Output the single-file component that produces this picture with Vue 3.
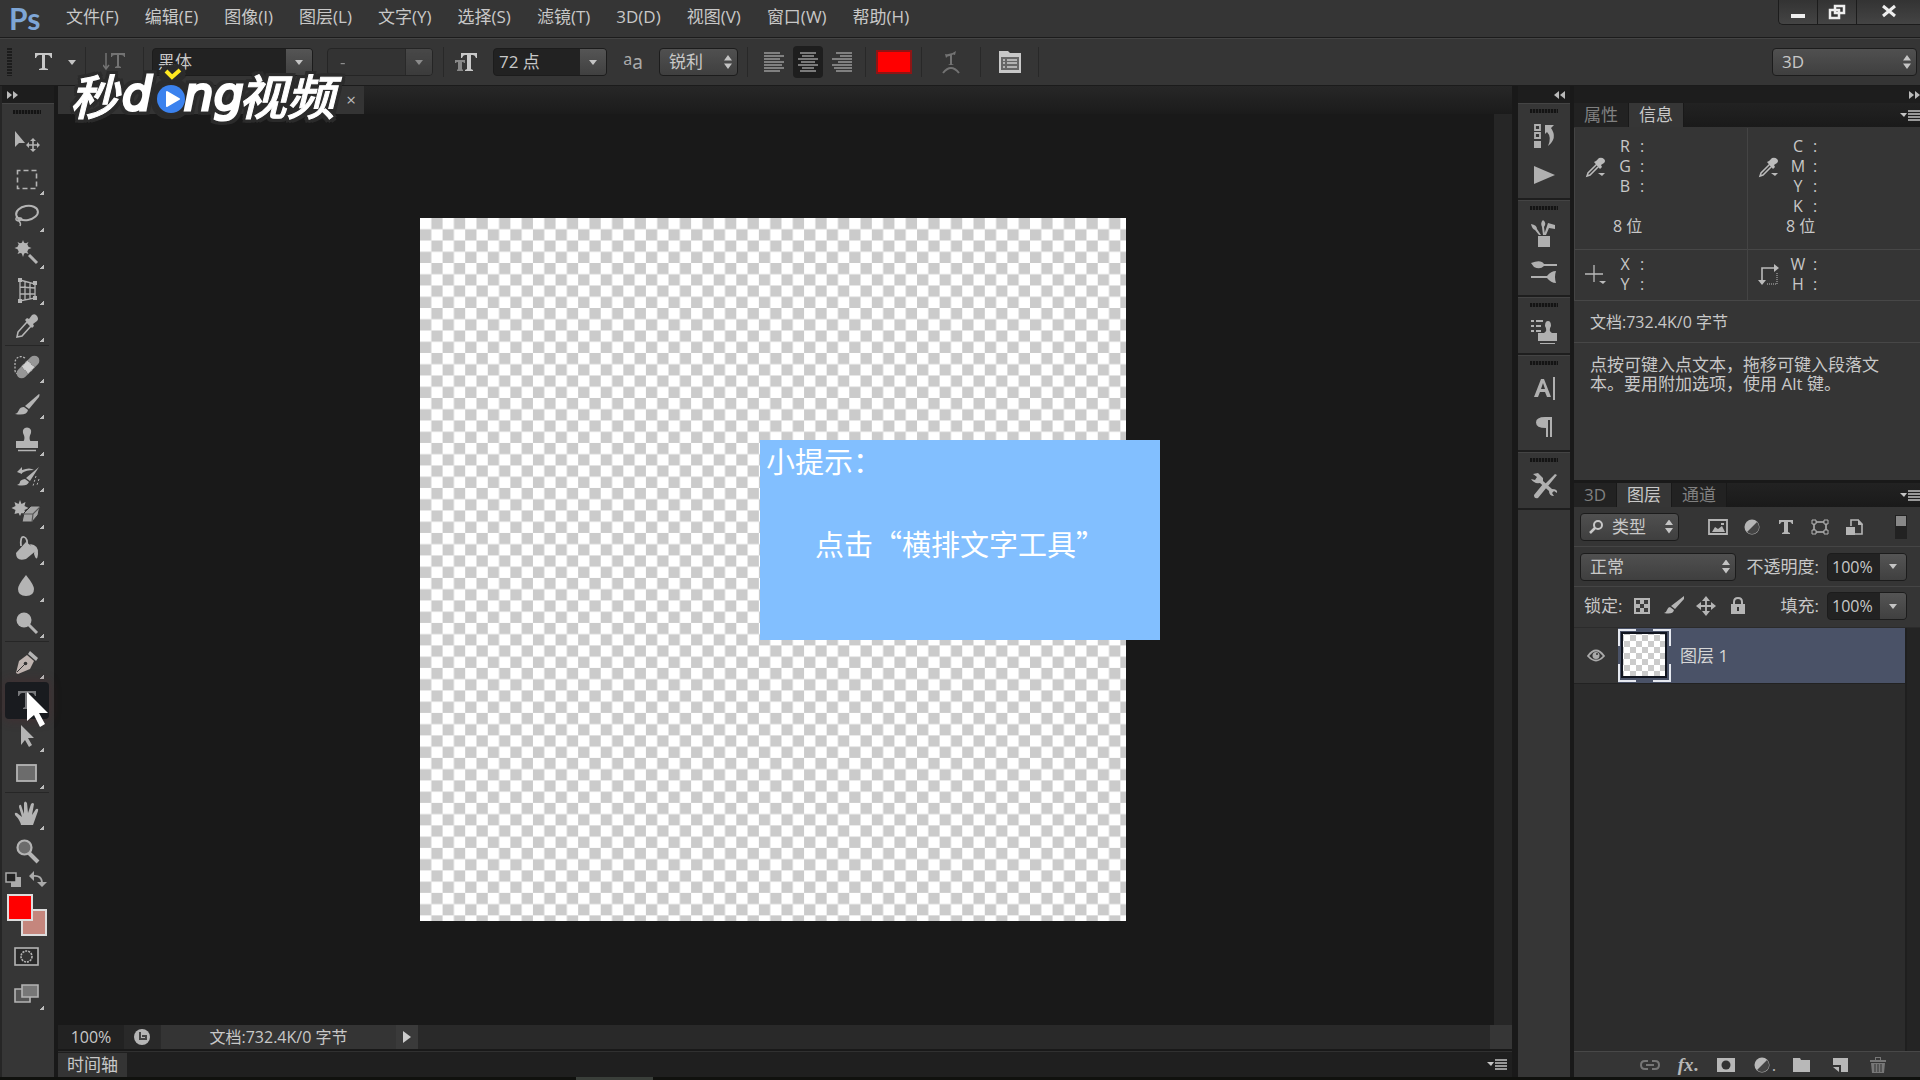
<script setup>
import { h, ref } from 'vue'

const icons = {
  move: '<path d="M10 6v16l4-4h6z" fill="currentColor"/><path d="M28 14v12M22 20h12" stroke="currentColor" stroke-width="1.6"/><path d="M28 13l3 3h-6zM28 27l3-3h-6zM21 20l3-3v6zM35 20l-3-3v6z" fill="currentColor"/>',
  marquee: '<rect x="12.500" y="8.500" width="19" height="18" fill="none" stroke="currentColor" stroke-width="1.600" stroke-dasharray="5 3" stroke-dashoffset="2"/>',
  lasso: '<ellipse cx="22" cy="14" rx="11" ry="7" transform="rotate(-10 22 14)" fill="none" stroke="currentColor" stroke-width="2"/><path d="M12 18c-3 3 1 5 4 3s-3-3-3-1 4 3 2 7" fill="none" stroke="currentColor" stroke-width="1.500"/>',
  wand: '<path d="M18 5l1.500 4 4-2-2 4 5 2-5 2 2 4-4-1.500-1.500 4.500-1.500-4.500-4 1.500 2-4-5-2 5-2-2-4 4 2z" fill="currentColor"/><circle cx="18" cy="13" r="5.500" fill="currentColor"/><path d="M24 20l8 8" stroke="currentColor" stroke-width="3"/>',
  crop: '<path d="M15 8l15 4v14l-15 3zM20 9v19M25 11v16M15 15l15 1M15 22h15" fill="none" stroke="currentColor" stroke-width="1.300"/><path d="M13 6h4v4h-4zM28 9h4v4h-4zM28 24h4v4h-4zM13 27h4v4h-4z" fill="currentColor"/>',
  eyedropper: '<path d="M22 13l-9 10-1 5 5-1 9-10z" fill="none" stroke="currentColor" stroke-width="1.600"/><path d="M20 11l2-2 2 1 3-4q3-2 5 1t0 5l-4 3 1 2-2 2z" fill="currentColor"/>',
  heal: '<path d="M20 9c-4-3-10-1-10 5v7q0 4 4 4" fill="none" stroke="currentColor" stroke-width="1.300" stroke-dasharray="2 1.500"/><rect x="9" y="13" width="28" height="10" rx="5" transform="rotate(-45 23 18)" fill="#969696"/><rect x="18.500" y="13" width="9" height="10" transform="rotate(-45 23 18)" fill="#d0d0d0" stroke="#777" stroke-width="1" stroke-dasharray="1 1"/>',
  brush: '<path d="M34 8q1 0 0 3l-10 12-4-3z" fill="currentColor"/><path d="M19 21l4 3q-1 6-13 4 3-1 4-4t5-3z" fill="currentColor"/>',
  stamp: '<path d="M18 22v-2q3-3 0-9-1-5 4-5.500 5 .5 4 5.500-3 6 0 9v2zM11 19h22v7H11z" fill="currentColor"/><path d="M13 28.500h18" stroke="currentColor" stroke-width="1.500"/>',
  history: '<path d="M12 13l5-5v3q8-3 12 0-8 0-12 3v1z" fill="currentColor"/><path d="M34 8l-9 14-4-3zM20 20l4 3q-2 5-12 3 3-1 3-3t5-3z" fill="currentColor"/><path d="M31 17l-3 10M34 20l-2 6" stroke="currentColor" stroke-dasharray="2 2"/>',
  eraser: '<path d="M15 5l1.500 4 4-2-1 4 4 2-4 2 1 4-4-1-1.500 3-1.500-3-4 1 1-4-4-2 4-2-1-4 4 2z" fill="currentColor"/><path d="M19 18l7-7h9l-2 9-6 7H17z" fill="#a4a4a4" stroke="#333"/><path d="M18 19h10l7-7M28 19l-1 8" fill="none" stroke="#555" stroke-width="1.200"/>',
  bucket: '<path d="M16 14q-1-10 3-9t3 10" fill="none" stroke="currentColor" stroke-width="1.800"/><path d="M11 21l10-11 11 8-11 9q-10 3-10-6z" fill="currentColor"/><path d="M25 12q9 1 8 10t-4 0q1-4-2-6z" fill="currentColor"/>',
  drop: '<path d="M21 7q8 10 8 14 0 7-8 7t-8-7q0-4 8-14z" fill="currentColor"/>',
  dodge: '<circle cx="19" cy="15" r="7.500" fill="currentColor"/><path d="M23 19l9 9" stroke="currentColor" stroke-width="3"/>',
  pen: '<path d="M11 28l3-12 8-6 7 6-4 8-12 5z" fill="#bfb4b0"/><path d="M25 6l8 7-2 3-8-7z" fill="currentColor"/><path d="M12 27l8-8" stroke="#333" stroke-width="1"/><circle cx="20.500" cy="18.500" r="1.800" fill="#333"/>',
  type: '<path d="M13 9h18v5h-1q-1-3-3-3h-3v14l2 1v1h-8v-1l2-1V11h-3q-2 0-3 3h-1z" fill="currentColor"/>',
  path: '<path d="M16 6v20l4-5 4 7 3-2-4-7h6z" fill="currentColor"/>',
  rect: '<rect x="12" y="9" width="19" height="16" fill="#6c6c6c" stroke="currentColor" stroke-width="1.800"/>',
  hand: '<path d="M16 29q-1-5-6-10-1-3 2-2l5 4-3-10q0-3 2-2l3 9 0-11q1-3 3 0l1 10 3-9q2-2 3 0l-2 11 4-6q3-1 2 2l-5 14z" fill="currentColor"/>',
  zoom: '<circle cx="19.500" cy="14.500" r="7" fill="#6c6c6c" stroke="currentColor" stroke-width="2.200"/><path d="M24 20l9 9" stroke="currentColor" stroke-width="4"/>',
  mask: '<rect x="10" y="10" width="23" height="17" fill="#292929" stroke="currentColor" stroke-width="1.600"/><circle cx="21.500" cy="18.500" r="5.500" fill="#333" stroke="currentColor" stroke-width="1.600" stroke-dasharray="2 1"/>',
  screens: '<path d="M10 13h15v13H10z" fill="#555" stroke="currentColor" stroke-width="1.600"/><path d="M17 9h16v12H17z" fill="#777" stroke="currentColor" stroke-width="1.600"/>',
  defaults: '<path d="M6 7h10v10H6z" fill="currentColor"/><path d="M1 3h10v9H1z" fill="#222" stroke="currentColor" stroke-width="1.500"/>',
  swap: '<path d="M4 6q9-1 9 7" fill="none" stroke="currentColor" stroke-width="1.800"/><path d="M0 6l5-5v10zM8 12h10l-5 5z" fill="currentColor"/>',
  dHistory: '<path d="M4 4h5v5H4zM4 12h5v5H4z" fill="none" stroke="currentColor" stroke-width="1.800"/><path d="M3 20h7v7H3z" fill="currentColor"/><path d="M14 4h9l-3 3q7 10-3 18 4-9-1-14l-2 2z" fill="currentColor"/>',
  dPlay: '<path d="M3 6l21 9-21 9z" fill="currentColor"/>',
  dBrushes: '<path d="M7 18h12v11H7zM12 2q4 3 1 7l1 8h-2l-1-8q-2-4 1-7zM0 6q6 1 6 5l4 6H8l-4-5q-3-1-4-6zM17 5l7 2v4l-6-1-3 7h-2z" fill="currentColor"/>',
  dPresets: '<path d="M0 6q10-4 13 1h13v2H13q-4 4-10 1zM0 19h16q4-5 9-5-2 6 0 12-5 0-9-5H0z" fill="currentColor"/>',
  dClone: '<path d="M7 18h19v8H7zM13 18q4-2 1-7 0-5 3-5t3 5q-3 5 1 7zM9 28h15v1H9z" fill="currentColor"/><path d="M0 6h3M0 11h3M0 16h3M5 6h7M5 11h5M5 16h5" stroke="currentColor" stroke-width="2"/>',
  dChar: '<path d="M3 24L10 6h3l7 18h-4l-2-5H9l-2 5zm7-8h4l-2-6zM22 4h2v23h-2z" fill="currentColor"/>',
  dPara: '<path d="M21 5v20h-2V8h-2v17h-2V16q-10 0-10-5.500T14 5z" fill="currentColor"/>',
  dTools: '<path d="M2 4l5-1 5 5 0 3 9 8q6 0 5 4l-3-2-2 2 2 3q-5 0-5-5l-9-8q-6 1-9-4l4 1 2-3z" fill="currentColor"/><path d="M24 4l2 1-9 11-3-2zM12 14l4 3-9 11q-4 1-4-3z" fill="currentColor"/>',
  oType: '<path d="M1 2h17v5h-1q-1-3-3-3h-3v13l3 1v1H5v-1l3-1V4H5Q3 4 2 7H1z" fill="currentColor"/>',
  oOrient: '<path d="M3 2v15M0 14l3 4 3-4" fill="none" stroke="currentColor" stroke-width="1.500"/><path d="M8 2h14v4h-1q0-2-3-2h-2v11l2 1v1h-6v-1l2-1V4h-2Q9 4 9 6H8z" fill="currentColor"/>',
  oSize: '<path d="M6 2h16v5h-1q-1-3-3-3h-2v14l2 1v1h-8v-1l2-1V4h-2Q8 4 7 7H6z" fill="currentColor"/><path d="M0 9h10v3H9q0-1-2-1v7l1 1v1H2v-1l1-1v-7q-2 0-2 1H0z" fill="#888"/>',
  oWarp: '<path d="M5 4q6 1 11-3l-1 4q-2-1-3 0v9l2 1H8l2-1V6Q7 6 6 8z" fill="currentColor"/><path d="M3 23q8-10 16 0" fill="none" stroke="currentColor" stroke-width="2"/>',
  oPanel: '<path d="M0 1h9l2 2h11v20H0z" fill="currentColor"/><path d="M2 7h18v13H2z" fill="#666"/><path d="M4 10h2M8 10h10M4 13h2M8 13h10M4 17h2M8 17h10" stroke="#ccc" stroke-width="1.500"/>',
  fImage: '<path d="M1 3h18v14H1z" fill="none" stroke="currentColor" stroke-width="1.800"/><path d="M4 15l3-5 3 2 4-3 3 6zM13 6h3v2h-3z" fill="currentColor"/>',
  fAdjust: '<circle cx="10" cy="10" r="7.500" fill="currentColor"/><path d="M15 5A7 7 0 015 15z" fill="#444"/>',
  fType: '<path d="M3 3h14v4h-1q-1-2-2-2h-2v10l2 1v1H6v-1l2-1V5H6Q5 5 4 7H3z" fill="currentColor"/>',
  fShape: '<path d="M4 5h12v10H4z" fill="none" stroke="currentColor" stroke-width="1.500"/><path d="M2 3h4v4H2zM14 3h4v4h-4zM2 13h4v4H2zM14 13h4v4h-4z" fill="#333" stroke="currentColor"/>',
  fSmart: '<path d="M7 9V3h7l4 4v10h-7" fill="none" stroke="currentColor" stroke-width="1.600"/><path d="M14 2v6h5M2 10h9v8H2z" fill="currentColor"/>',
  lPixels: '<path d="M2 2h16v16H2z" fill="currentColor"/><path d="M4 4h4v4H4zM12 4h4v4h-4zM8 8h4v4H8zM4 12h4v4H4zM12 12h4v4h-4z" fill="#3c3c3c"/>',
  lBrush: '<path d="M20 0q1 1 0 3l-9 10-4-3zM6 11l4 3q-1 5-10 3 2 0 3-3t3-3z" fill="currentColor"/>',
  lMove: '<path d="M10 3v14M3 10h14" stroke="currentColor" stroke-width="1.800"/><path d="M10 0l4 5H6zM10 20l4-5H6zM0 10l5-4v8zM20 10l-5-4v8z" fill="currentColor"/>',
  lLock: '<path d="M6 9V6q0-4 4-4t4 4v3" fill="none" stroke="currentColor" stroke-width="2"/><path d="M3 8h14v10H3z" fill="currentColor"/><path d="M9 11h2v4H9z" fill="#333"/>',
  bLink: '<path d="M8 6H5Q1 6 1 10t4 4h3M12 6h3q4 0 4 4t-4 4h-3M6 10h8" fill="none" stroke="currentColor" stroke-width="2"/>',
  bMask: '<path d="M1 3h18v14H1z" fill="currentColor"/><circle cx="10" cy="10" r="4.500" fill="#333"/>',
  bFolder: '<path d="M1 3h7l1 2h9v12H1z" fill="currentColor"/>',
  bNew: '<path d="M3 3h15v14h-7v-7H3z" fill="currentColor"/><path d="M3 12h6v5z" fill="currentColor"/>',
  bTrash: '<path d="M2 5h16v2H2zM3 8h14l-1 10H4zM7 5V2h6v3h-1V3H8v2z" fill="currentColor"/><path d="M7 9v8M10 9v8M13 9v8" stroke="#333"/>',
  search: '<circle cx="9" cy="6" r="4" fill="none" stroke="currentColor" stroke-width="2"/><path d="M6 9l-5 5" stroke="currentColor" stroke-width="2.500"/>',
  dropper: '<path d="M12 7l-9 9-1 3 3-1 9-9z" fill="none" stroke="currentColor" stroke-width="1.500"/><path d="M9 5l2-1 3-3q3-1 5 1t0 4l-3 2 1 2-2 2z" fill="currentColor"/><path d="M13 16h7l-3 3z" fill="currentColor"/>',
  cross: '<path d="M9 1v17M0 10h18" stroke="currentColor" stroke-width="1.300"/><path d="M14 17h7l-3 3z" fill="currentColor"/>',
  size: '<path d="M4 17V4h13" fill="none" stroke="currentColor" stroke-width="1.600"/><path d="M16 0l5 4-5 4zM0 16h8l-4 5z" fill="currentColor"/><path d="M19 9v11H9" fill="none" stroke="currentColor" stroke-dasharray="1 1"/>',
  eye: '<path d="M1 8q8-11 16 0-8 9-16 0z" fill="none" stroke="currentColor" stroke-width="1.800"/><circle cx="9" cy="7.500" r="3.500" fill="currentColor"/><circle cx="10" cy="6" r="1" fill="#333"/>',
  menu: '<path d="M0 3h7l-3 4z" fill="#c4c4c4"/><path d="M8 1h12M8 4h12M8 7h12M8 10h12" stroke="#999" stroke-width="2"/>',
}

const Icon = (props) =>
  h('svg', {
    viewBox: `0 0 ${props.w} ${props.t}`,
    width: props.w,
    height: props.t,
    'aria-hidden': 'true',
    innerHTML: icons[props.name],
  })
Icon.props = ['name', 'w', 't']

const menus = ['文件(F)', '编辑(E)', '图像(I)', '图层(L)', '文字(Y)', '选择(S)', '滤镜(T)', '3D(D)', '视图(V)', '窗口(W)', '帮助(H)']
const toolGroups = [
  ['move', 'marquee', 'lasso', 'wand', 'crop', 'eyedropper'],
  ['heal', 'brush', 'stamp', 'history', 'eraser', 'bucket', 'drop', 'dodge'],
  ['pen', 'type', 'path', 'rect'],
  ['hand', 'zoom'],
]
const noFlyout = ['move', 'zoom', 'type', 'mask']
const dock = [['dHistory', 'dPlay'], ['dBrushes', 'dPresets'], ['dClone'], ['dChar', 'dPara'], ['dTools']]
const filters = ['fImage', 'fAdjust', 'fType', 'fShape', 'fSmart']
const locks = ['lPixels', 'lBrush', 'lMove', 'lLock']
const aligns = [
  { id: 'left', d: 'M0 1h16M0 4h20M0 7h16M0 10h20M0 13h18M0 16h20M0 19h16' },
  { id: 'center', d: 'M2 1h16M4 4h12M0 7h20M3 10h14M0 13h20M4 16h12M2 19h16' },
  { id: 'right', d: 'M4 1h16M8 4h12M0 7h20M6 10h14M0 13h20M2 16h18M4 19h16' },
]
const fontSize = ref('72 点')
const opacity = ref('100%')
const fill = ref('100%')
</script>

<template>
  <div class="app">
    <header class="menubar">
      <span class="ps">Ps</span>
      <nav class="menus">
        <button v-for="m in menus" :key="m">{{ m }}</button>
      </nav>
      <div class="winbtns">
        <button aria-label="最小化"><svg width="16" height="20"><path d="M1 12h14v4H1z" fill="#eee" /></svg></button>
        <button aria-label="还原"><svg width="18" height="20"><path d="M7 4h9v7H7zM2 8h9v8H2z" fill="#333" stroke="#eee" stroke-width="2.500" /></svg></button>
        <button class="wide" aria-label="关闭"><svg width="16" height="20"><path d="M2 4l12 10M14 4L2 14" stroke="#eee" stroke-width="3" /></svg></button>
      </div>
    </header>

    <section class="options">
      <i class="vgrip"></i>
      <div class="seg s1"><Icon name="oType" w="20" t="22" /><i class="down"></i></div>
      <div class="seg s2 dim"><Icon name="oOrient" w="24" t="22" /></div>
      <div class="seg s3">
        <label class="combo family"><select aria-label="字体"><option>黑体</option></select><i class="drop"></i></label>
        <label class="combo style off"><select aria-label="字形" disabled><option>-</option></select><i class="drop"></i></label>
      </div>
      <div class="seg s4">
        <Icon name="oSize" w="24" t="22" />
        <div class="combo size"><input v-model="fontSize" aria-label="字号" /><button class="drop" aria-label="选择字号"></button></div>
        <span class="aa"><sup>a</sup>a</span>
        <label class="pick sharp"><select aria-label="消除锯齿"><option>锐利</option></select><i class="updown"></i></label>
      </div>
      <div class="seg s5">
        <button v-for="a in aligns" :key="a.id" class="align" :class="{ on: a.id === 'center' }" :aria-label="a.id">
          <svg width="20" height="20"><path :d="a.d" stroke="#999" stroke-width="1.500" /></svg>
        </button>
      </div>
      <div class="seg s6"><button class="color" aria-label="文本颜色"></button></div>
      <div class="seg s7 dim"><Icon name="oWarp" w="22" t="24" /></div>
      <div class="seg s8"><Icon name="oPanel" w="22" t="24" /></div>
      <label class="pick workspace"><select aria-label="工作区"><option>3D</option></select><i class="updown"></i></label>
    </section>

    <div class="body">
      <aside class="tools">
        <div class="strip"><svg width="12" height="8"><path d="M1 0l5 4-5 4zM7 0l5 4-5 4z" fill="#bbb" /></svg></div>
        <div class="toolbody">
          <i class="grip"></i>
          <div v-for="(g, n) in toolGroups" :key="n" class="group" :class="'g' + n">
            <button v-for="t in g" :key="t" class="tool" :class="{ active: t === 'type' }" :aria-label="t">
              <Icon :name="t" w="44" t="36" />
              <i v-if="!noFlyout.includes(t)" class="corner"></i>
              <svg v-if="t === 'type'" class="cursor" width="26" height="38"><path d="M2 1v29l7-6 6 12 5-3-6-11h9z" fill="#fff" /></svg>
            </button>
          </div>
          <div class="minis"><Icon name="defaults" w="20" t="20" /><Icon name="swap" w="20" t="20" /></div>
          <div class="swatches"><button class="back" aria-label="背景色"></button><button class="fore" aria-label="前景色"></button></div>
          <button class="tool solo" aria-label="快速蒙版"><Icon name="mask" w="44" t="36" /></button>
          <button class="tool solo" aria-label="屏幕模式"><Icon name="screens" w="44" t="36" /><i class="corner"></i></button>
        </div>
      </aside>

      <main class="doc">
        <div class="doctabs"><div class="doctab"><button aria-label="关闭文档">×</button></div></div>
        <div class="view">
          <div class="stage">
            <div class="artboard">
              <svg class="checker" viewBox="0 0 500 500" preserveAspectRatio="none">
                <defs>
                  <pattern id="cells" width="16" height="16" patternUnits="userSpaceOnUse">
                    <path d="M0 0h16v16H0z" fill="#fff" /><path d="M8 0h8v8H8zM0 8h8v8H0z" fill="#cbcbcb" />
                  </pattern>
                </defs>
                <rect width="500" height="500" fill="url(#cells)" />
              </svg>
              <div class="tip" lang="zh-CN"><p>小提示：</p><p class="msg">点击“横排文字工具”</p></div>
            </div>
          </div>
          <div class="vscroll"></div>
        </div>
        <div class="status">
          <span class="pct">100%</span>
          <svg class="clock" width="18" height="18"><circle cx="9" cy="9" r="8" fill="#b5b5b5" /><path d="M7 4v7h6V8H9" fill="none" stroke="#444" stroke-width="2" /></svg>
          <span class="docsize">文档:732.4K/0 字节</span>
          <button class="next" aria-label="状态菜单"><svg width="9" height="12"><path d="M0 0l8 6-8 6z" fill="#ccc" /></svg></button>
          <i class="corner-box"></i>
        </div>
        <div class="timeline"><span>时间轴</span><Icon name="menu" w="20" t="12" /></div>
      </main>

      <aside class="dock">
        <div class="strip right"><svg width="12" height="8"><path d="M5 0L0 4l5 4zM11 0L6 4l5 4z" fill="#bbb" /></svg></div>
        <div v-for="(g, n) in dock" :key="n" class="dockgroup">
          <i class="grip"></i>
          <button v-for="d in g" :key="d" :aria-label="d"><Icon :name="d" w="27" t="30" /></button>
        </div>
        <div class="dockrest"></div>
      </aside>

      <aside class="panels">
        <div class="strip end"><svg width="12" height="8"><path d="M1 0l5 4-5 4zM7 0l5 4-5 4z" fill="#bbb" /></svg></div>
        <div class="tabs"><button>属性</button><button class="on">信息</button><Icon name="menu" w="20" t="12" /></div>
        <section class="info">
          <div class="inforow tall">
            <div class="cell"><Icon name="dropper" w="22" t="22" /><dl><dt>R</dt><dd>:</dd><dt>G</dt><dd>:</dd><dt>B</dt><dd>:</dd></dl><span class="bits">8 位</span></div>
            <div class="cell"><Icon name="dropper" w="22" t="22" /><dl><dt>C</dt><dd>:</dd><dt>M</dt><dd>:</dd><dt>Y</dt><dd>:</dd><dt>K</dt><dd>:</dd></dl><span class="bits">8 位</span></div>
          </div>
          <div class="inforow">
            <div class="cell"><Icon name="cross" w="22" t="22" /><dl><dt>X</dt><dd>:</dd><dt>Y</dt><dd>:</dd></dl></div>
            <div class="cell"><Icon name="size" w="22" t="22" /><dl><dt>W</dt><dd>:</dd><dt>H</dt><dd>:</dd></dl></div>
          </div>
          <p class="docline">文档:732.4K/0 字节</p>
          <p class="hint">点按可键入点文本，拖移可键入段落文本。要用附加选项，使用 Alt 键。</p>
        </section>
        <div class="tabs second"><button>3D</button><button class="on">图层</button><button>通道</button><Icon name="menu" w="20" t="12" /></div>
        <section class="layers">
          <div class="lrow">
            <label class="pick kind"><Icon name="search" w="15" t="16" /><select aria-label="过滤类型"><option>类型</option></select><i class="updown"></i></label>
            <div class="filters"><button v-for="f in filters" :key="f" :aria-label="f"><Icon :name="f" w="20" t="20" /></button></div>
            <button class="toggle" aria-label="过滤开关"></button>
          </div>
          <div class="lrow">
            <label class="pick mode"><select aria-label="混合模式"><option>正常</option></select><i class="updown"></i></label>
            <label class="lab" for="opacity">不透明度:</label>
            <div class="combo num"><input id="opacity" v-model="opacity" /><button class="drop" aria-label="调整不透明度"></button></div>
          </div>
          <div class="lrow last">
            <span class="locklab">锁定:</span>
            <div class="locks"><button v-for="l in locks" :key="l" :aria-label="l"><Icon :name="l" w="20" t="20" /></button></div>
            <label class="lab" for="fill">填充:</label>
            <div class="combo num"><input id="fill" v-model="fill" /><button class="drop" aria-label="调整填充"></button></div>
          </div>
          <div class="list">
            <div class="items">
              <div class="layer">
                <button class="eye" aria-label="显示图层"><Icon name="eye" w="18" t="16" /></button>
                <div class="name">
                  <svg class="thumb" width="54" height="54">
                    <defs>
                      <pattern id="mini" x="6" y="6" width="12" height="12" patternUnits="userSpaceOnUse">
                        <path d="M0 0h12v12H0z" fill="#fff" /><path d="M6 0h6v6H6zM0 6h6v6H0z" fill="#cbcbcb" />
                      </pattern>
                    </defs>
                    <path d="M4 4h44v44H4z" fill="url(#mini)" stroke="#10141f" stroke-width="2" />
                    <path d="M1 17V1h17M35 1h17v16M52 35v17H35M18 52H1V35" fill="none" stroke="#e6e9f0" stroke-width="2" />
                  </svg>
                  <span>图层 1</span>
                </div>
              </div>
            </div>
            <div class="lscroll"></div>
          </div>
          <footer class="lfoot">
            <button class="faded" aria-label="链接图层"><Icon name="bLink" w="20" t="20" /></button>
            <button class="fx" aria-label="图层样式"><em>fx</em>.</button>
            <button aria-label="添加蒙版"><Icon name="bMask" w="20" t="20" /></button>
            <button aria-label="调整图层"><Icon name="fAdjust" w="20" t="20" />.</button>
            <button aria-label="新建组"><Icon name="bFolder" w="20" t="20" /></button>
            <button aria-label="新建图层"><Icon name="bNew" w="20" t="20" /></button>
            <button class="faded" aria-label="删除图层"><Icon name="bTrash" w="20" t="20" /></button>
          </footer>
        </section>
      </aside>
    </div>
    <div class="bottom"></div>

    <div class="watermark">
      <span class="cjk">秒</span><span class="lat">d</span>
      <svg width="30" height="50" viewBox="0 0 30 50"><path d="M9 5l7 6 8-7" fill="none" stroke="#2b2b2b" stroke-width="10" /><circle cx="15" cy="33" r="17" fill="#2b2b2b" /><path d="M10 5l6 6 8-7" fill="none" stroke="#ffe81f" stroke-width="4" /><circle cx="15" cy="33" r="14" fill="#3b82ee" /><path d="M11 26l12 7-12 7z" fill="#fff" stroke="#fff" stroke-width="2" stroke-linejoin="round" /></svg>
      <span class="lat end">ng</span><span class="cjk">视频</span>
    </div>
  </div>
</template>

<style>
body { background: #1a1a1a; }
</style>

<style scoped>
* { box-sizing: border-box; }
.app { position: relative; display: flex; flex-direction: column; height: 100vh; min-height: 1060px; overflow: hidden; background: #191919; color: #c8c8c8; font: 17px/20px "Open Sans", "Noto Sans CJK SC", sans-serif; }
button, input, select { font: inherit; color: inherit; margin: 0; padding: 0; border: 0; background: none; border-radius: 0; outline: 0; }
button { display: flex; align-items: center; justify-content: center; }
select { appearance: none; opacity: 1; }
p, dl, dd { margin: 0; }
svg { display: block; flex: none; }

.menubar { display: flex; height: 38px; background: #353535; border-bottom: 1px solid #1c1c1c; }
.ps { width: 66px; padding-left: 9px; font: bold 30px/36px Lato, sans-serif; color: #7ea6d6; }
.menus { display: flex; gap: 26px; height: 34px; }
.winbtns { display: flex; margin-left: auto; height: 25px; border: 1px solid #1c1c1c; border-top: 0; border-right: 0; border-radius: 0 0 0 5px; background: linear-gradient(#333, #444); }
.winbtns button { width: 39px; border-right: 1px solid #1c1c1c; }
.winbtns .wide { width: 63px; border-right: 0; }

.options { display: flex; align-items: center; height: 48px; background: #353535; border-top: 1px solid #444; border-bottom: 1px solid #1b1b1b; flex: none; }
.vgrip { width: 5px; height: 28px; margin-left: 7px; background: repeating-linear-gradient(#1c1c1c 0 2px, #353535 2px 3px); }
.seg { display: flex; align-items: center; height: 30px; border-right: 1px solid #282828; }
.dim { color: #737373; }
.s1 { width: 74px; padding-left: 22px; gap: 14px; }
.s2 { width: 58px; padding-left: 17px; }
.s3 { width: 300px; padding-left: 8px; gap: 14px; }
.s4 { width: 304px; padding-left: 11px; gap: 14px; }
.s5 { width: 118px; padding-left: 11px; gap: 4px; }
.s6 { width: 56px; justify-content: center; }
.s7 { width: 59px; justify-content: center; }
.s8 { width: 58px; justify-content: center; }
.down, .combo .drop::after { width: 0; height: 0; border: 4px solid transparent; border-top: 5px solid #c4c4c4; border-bottom: 0; }
.combo { display: flex; height: 28px; border: 1px solid #1c1c1c; border-radius: 4px; background: #222; overflow: hidden; flex: none; }
.combo select, .combo input { flex: 1; min-width: 0; width: 0; padding-left: 5px; line-height: 24px; }
.combo .drop { display: flex; align-items: center; justify-content: center; width: 27px; background: linear-gradient(#555, #404040); border-left: 1px solid #222; }
.combo .drop::after { content: ""; }
.family { width: 161px; }
.style { width: 106px; }
.off { background: #333; opacity: .6; }
.off select { padding-left: 12px; }
.size { width: 114px; }
.aa { width: 24px; font: 19px/24px "Noto Sans", sans-serif; color: #aaa; display: flex; justify-content: center; }
.aa sup { font-size: 16px; line-height: 18px; vertical-align: top; }
.pick { position: relative; display: flex; align-items: center; height: 28px; border: 1px solid #1c1c1c; border-radius: 4px; background: linear-gradient(#505050, #3f3f3f); }
.pick select { flex: 1; height: 26px; padding-left: 9px; width: 0; min-width: 0; }
.updown { width: 8px; height: 14px; margin-right: 5px; background: #c4c4c4; clip-path: polygon(50% 0, 100% 40%, 0 40%, 0 60%, 100% 60%, 50% 100%, 0 60%, 0 40%); }
.sharp { width: 79px; }
.align { width: 30px; height: 32px; border-radius: 4px; }
.align.on { background: #1e1e1e; }
.color { width: 36px; height: 24px; background: #f00; border: 2px solid #8e1515; }
.workspace { width: 145px; margin: 0 3px 0 auto; }

.body { display: flex; flex: 1; min-height: 0; }
.strip { display: flex; align-items: center; height: 17px; padding-left: 4px; background: #1d1d1d; flex: none; }
.strip.right { justify-content: flex-end; padding: 0 4px 0 0; }
.strip.end { justify-content: flex-end; padding: 0; }
.grip { display: block; width: 28px; height: 4px; background: repeating-linear-gradient(90deg, #141414 0 2px, #2c2c2c 2px 3px); }
.tools { display: flex; flex-direction: column; width: 54px; flex: none; border-left: 2px solid #262626; }
.toolbody { flex: 1; display: flex; flex-direction: column; align-items: center; background: #363636; border-top: 1px solid #444; padding: 6px 2px 0 0; }
.toolbody > .grip { margin-bottom: 11px; }
.group { display: flex; flex-direction: column; width: 44px; border-bottom: 1px solid #262626; margin-bottom: 3px; color: #b4b4b4; flex: none; }
.g0 { height: 221px; }
.g1 { height: 293px; }
.g2 { height: 148px; }
.g3 { height: 73px; border: 0; margin: 0; }
.tool { position: relative; flex: 1; min-height: 0; width: 44px; color: #b4b4b4; }
.tool.active { background: #191b1f; border-radius: 4px; color: #78797c; box-shadow: 0 0 12px #5a202a66; }
.tool.solo { flex: none; height: 38px; }
.corner { position: absolute; right: 5px; bottom: 3px; width: 4px; height: 4px; background: linear-gradient(135deg, transparent 50%, #bbb 50%); }
.cursor { position: absolute; left: 20px; top: 9px; z-index: 2; }
.minis { display: flex; justify-content: space-between; width: 44px; height: 22px; padding-top: 1px; color: #aaa; }
.swatches { display: grid; width: 40px; height: 42px; margin: 3px 0 1px; }
.swatches button { grid-area: 1 / 1; width: 26px; height: 27px; border: 2px solid #ddd; }
.fore { background: #f00; }
.swatches .back { background: #c5867d; place-self: end; }

.doc { display: flex; flex-direction: column; flex: 1; min-width: 0; margin: 0 6px 0 4px; }
.doctabs { height: 28px; background: linear-gradient(#272727, #1b1b1b); flex: none; }
.doctab { display: flex; align-items: center; justify-content: flex-end; width: 306px; height: 28px; padding-right: 8px; background: #343434; color: #bbb; }
.view { display: flex; flex: 1; min-height: 0; background: #191919; }
.stage { display: flex; flex: 1; align-items: center; justify-content: center; padding-right: 6px; }
.artboard { position: relative; width: 706px; height: 703px; flex: none; }
.checker { width: 100%; height: 100%; }
.tip { position: absolute; left: 340px; top: 222px; width: 400px; height: 200px; padding: 3px 6px; background: #82bfff; color: #fff; font: 29px/34px "Noto Sans CJK SC", sans-serif; }
.msg { padding-top: 49px; text-align: center; }
.vscroll { width: 18px; background: #262626; }
.status { display: flex; align-items: center; height: 24px; background: #292929; font-size: 16px; flex: none; }
.pct { width: 66px; text-align: center; background: #222; line-height: 24px; }
.clock { margin-left: 9px; margin-right: 9px; }
.docsize { width: 236px; text-align: center; background: #343434; line-height: 24px; border-left: 1px solid #2a2a2a; }
.next { width: 22px; height: 24px; background: #3a3a3a; }
.corner-box { width: 22px; height: 24px; margin-left: auto; background: #363636; }
.timeline { display: flex; align-items: center; justify-content: space-between; height: 26px; margin-top: 2px; padding-right: 5px; background: #1f1f1f; border-top: 1px solid #303030; flex: none; }
.timeline span { padding: 0 9px; background: #343434; line-height: 24px; }

.dock { display: flex; flex-direction: column; width: 52px; flex: none; color: #b0b0b0; }
.dockgroup { display: flex; flex-direction: column; align-items: center; padding: 5px 0 4px; background: #363636; border: 1px solid #444; border-bottom: 2px solid #1e1e1e; border-right: 0; border-left: 0; }
.dockgroup button { height: 39px; }
.dockgroup .grip { margin-bottom: 3px; }
.dockrest { flex: 1; background: #363636; }

.panels { display: flex; flex-direction: column; width: 346px; flex: none; margin-left: 4px; }
.tabs { display: flex; align-items: stretch; height: 24px; background: linear-gradient(#222, #1a1a1a); flex: none; }
.tabs button { padding: 0 10px; color: #808080; background: #222; border-right: 1px solid #191919; }
.tabs .on { background: #363636; color: #c8c8c8; }
.tabs svg { margin: 7px 0 0 auto; }
.second { margin-top: 3px; }
.info { height: 353px; background: #353535; flex: none; }
.inforow { display: flex; height: 51px; padding-top: 4px; border-bottom: 1px solid #474747; font-size: 16px; }
.inforow.tall { height: 123px; padding-top: 9px; }
.cell { flex: 1; display: grid; grid-template-columns: 22px 1fr; grid-template-rows: auto 1fr; column-gap: 6px; align-content: start; padding-left: 10px; border-left: 1px solid #444; margin-top: -8px; padding-top: 8px; }
.cell > svg { margin-top: 10px; color: #bbb; }
.tall .cell > svg { margin-top: 21px; }
.cell dl { display: grid; grid-template-columns: 24px 10px; justify-items: center; align-content: start; }
.tall .cell dl { height: 80px; }
.bits { grid-column: 2; }
.docline { height: 42px; padding: 11px 16px; border-bottom: 1px solid #474747; font-size: 16px; }
.hint { padding: 12px 38px 0 16px; line-height: 19px; }
.layers { flex: 1; display: flex; flex-direction: column; background: #353535; min-height: 0; }
.lrow { display: flex; align-items: center; height: 40px; padding: 0 13px 0 6px; border-bottom: 1px solid #454545; flex: none; }
.lrow.last { height: 41px; padding-bottom: 2px; border-bottom: 1px solid #2b2b2b; }
.kind { width: 99px; padding-left: 8px; }
.kind select { padding-left: 8px; }
.filters { display: flex; gap: 14px; margin-left: 29px; color: #b5b5b5; }
.toggle { width: 12px; height: 24px; margin-left: auto; background: linear-gradient(#888 0 45%, #222 45%); border: 1px solid #222; }
.mode { width: 156px; }
.lab { margin-left: auto; margin-right: 8px; }
.num { width: 80px; }
.num input { font-size: 16px; padding-left: 4px; }
.locklab { margin-left: 4px; }
.locks { display: flex; gap: 12px; margin-left: 10px; color: #b5b5b5; }
.list { display: flex; flex: 1; min-height: 0; background: #2c2c2c; }
.items { flex: 1; }
.layer { display: flex; height: 56px; border-bottom: 1px solid #222; }
.eye { width: 44px; background: #353535; color: #aaa; }
.name { display: flex; align-items: center; flex: 1; gap: 8px; background: #4a5267; color: #d6d6d6; }
.lscroll { width: 15px; background: #242424; border-left: 2px solid #1f1f1f; }
.lfoot { display: flex; align-items: center; justify-content: flex-end; gap: 18px; height: 26px; padding-right: 32px; border-top: 1px solid #484848; color: #b8b8b8; flex: none; }
.lfoot button { width: 20px; height: 22px; }
.fx { font: bold 19px/20px "Liberation Serif", serif; }
.faded { color: #777; }
.bottom { height: 3px; background: linear-gradient(90deg, transparent 0 30%, #3a3f3a 30% 34%, transparent 34%), #10110e; flex: none; }

.watermark { position: absolute; left: 70px; top: 66px; display: flex; align-items: flex-start; gap: 4px; height: 60px; color: #fff; font-style: italic; filter: drop-shadow(3px 0 0 #2b2b2b) drop-shadow(-3px 0 0 #2b2b2b) drop-shadow(0 3px 0 #2b2b2b) drop-shadow(0 -3px 0 #2b2b2b); }
.watermark svg { margin-right: -6px; overflow: visible; }
.cjk { font: italic 500 48px/56px "Noto Sans CJK SC", sans-serif; -webkit-text-stroke: 1px #fff; }
.lat { font: italic 47px/56px "DejaVu Sans", sans-serif; -webkit-text-stroke: 3px #fff; }
.lat.end { margin-right: -9px; }
</style>
